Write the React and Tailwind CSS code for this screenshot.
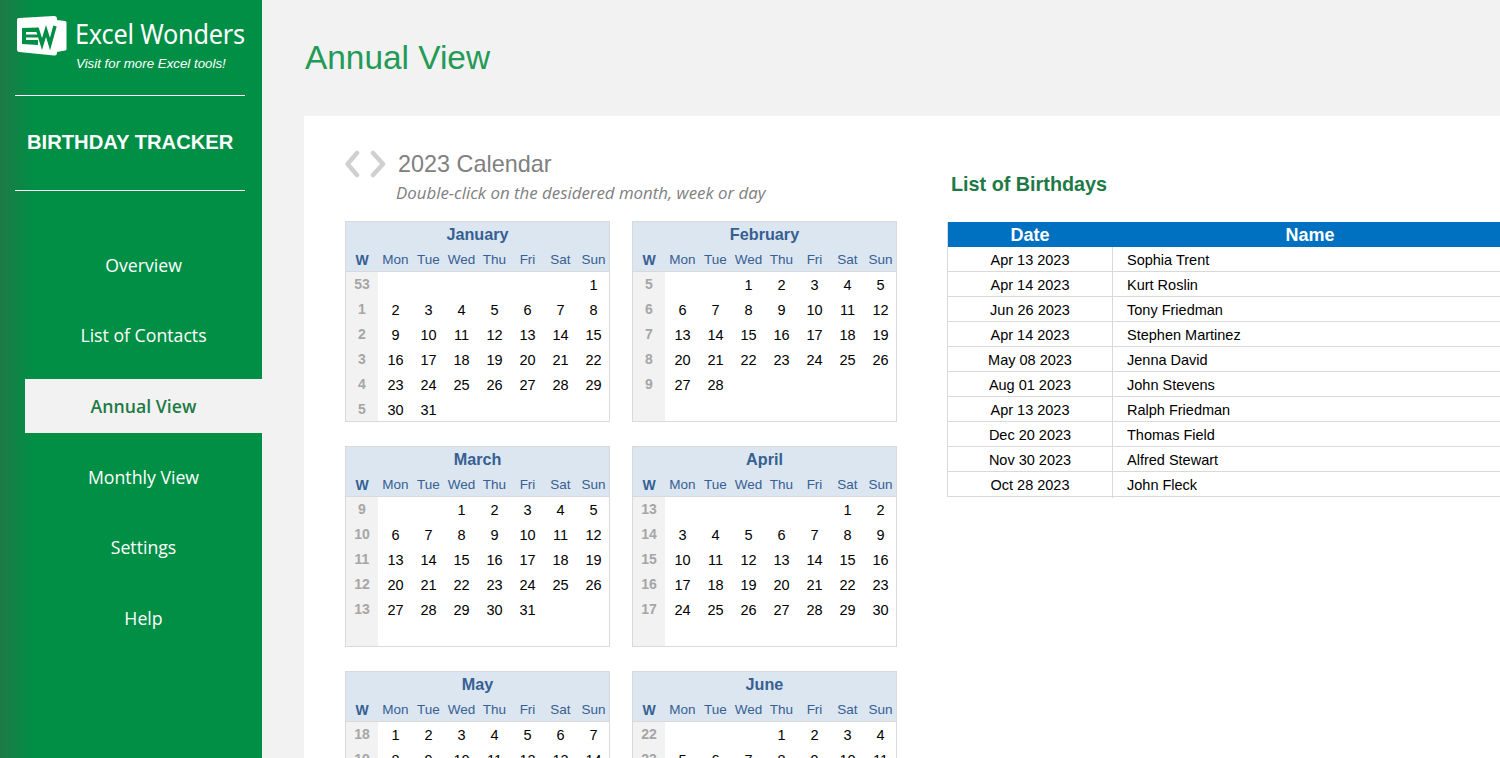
const navItems = ['Overview', 'List of Contacts', 'Annual View', 'Monthly View', 'Settings', 'Help'];

const months = [
  { name: 'January', index: 0, week: 53 },
  { name: 'February', index: 1, week: 5 },
  { name: 'March', index: 2, week: 9 },
  { name: 'April', index: 3, week: 13 },
  { name: 'May', index: 4, week: 18 },
  { name: 'June', index: 5, week: 22 },
];

const days = ['Mon', 'Tue', 'Wed', 'Thu', 'Fri', 'Sat', 'Sun'];

const birthdays = [
  ['Apr 13 2023', 'Sophia Trent'],
  ['Apr 14 2023', 'Kurt Roslin'],
  ['Jun 26 2023', 'Tony Friedman'],
  ['Apr 14 2023', 'Stephen Martinez'],
  ['May 08 2023', 'Jenna David'],
  ['Aug 01 2023', 'John Stevens'],
  ['Apr 13 2023', 'Ralph Friedman'],
  ['Dec 20 2023', 'Thomas Field'],
  ['Nov 30 2023', 'Alfred Stewart'],
  ['Oct 28 2023', 'John Fleck'],
];

const buildWeeks = monthIndex => {
  const offset = (new Date(2023, monthIndex, 1).getDay() + 6) % 7;
  const total = new Date(2023, monthIndex + 1, 0).getDate();
  const cells = [...Array(offset).fill(null), ...Array.from({ length: total }, (_, i) => i + 1)];
  const weeks = [];
  for (let i = 0; i < cells.length; i += 7) weeks.push(cells.slice(i, i + 7));
  return weeks;
};

const Logo = () => (
  <svg width="50" height="40" viewBox="0 0 50 40" className="shrink-0">
    <path d="M40 4 L48 5 Q49.5 5 49.5 6.5 L49.5 33 Q49.5 34.500 48 34.500 L40 36 Z" fill="#fff" />
    <path d="M2 2 L37 0 Q40 0 40 3 L40 37 Q40 40 37 39.500 L2 36 Q0 35.500 0 33.500 L0 4 Q0 2 2 2 Z" fill="#fff" />
    <path d="M5 12 L21 11.500 L21 29 L5 28 Z" fill="#008f45" />
    <path d="M9 16 H21 V18.500 H9 Z M9 21.500 H21 V24 H9 Z" fill="#fff" />
    <path d="M20 12 L25 28 L29 15 L33 28 L38 10" fill="none" stroke="#008f45" strokeWidth="3.500" />
  </svg>
);

const Sidebar = () => (
  <aside className="flex h-[758px] w-[262px] shrink-0 flex-col bg-[linear-gradient(90deg,#1e7a45_0,#008f45_34px)] text-white">
    <div className="flex h-[95px] flex-col pt-[16px]">
      <div className="flex items-start pl-[17px]">
        <Logo />
        <span className="ml-[8px] origin-left scale-x-[0.935] -translate-y-[1px] font-['Noto_Sans',sans-serif] text-[27px] leading-[38px] tracking-[-0.2px] whitespace-nowrap">
          Excel Wonders
        </span>
      </div>
      <p className="pl-[76px] text-[13.3px] leading-[16px] italic">Visit for more Excel tools!</p>
    </div>
    <div className="mx-[15px] h-px w-[230px] bg-white" />
    <div className="flex h-[94px] items-center pb-[2px] pl-[27px] text-[20.2px] font-bold">BIRTHDAY TRACKER</div>
    <div className="mx-[15px] h-px w-[230px] bg-white" />
    <nav className="mt-[47px] flex flex-col pl-[25px] font-['Open_Sans',sans-serif] text-[17.7px]">
      {navItems.map(item => (
        <div
          key={item}
          className={
            item === 'Annual View'
              ? 'mb-[16.6px] flex h-[54px] items-center justify-center bg-[#f2f2f2] font-semibold text-[#1e7a45]'
              : 'mb-[16.6px] flex h-[54px] items-center justify-center'
          }
        >
          {item}
        </div>
      ))}
    </nav>
  </aside>
);

const MonthCard = ({ name, index, week }) => {
  const weeks = buildWeeks(index);
  const rows = Array.from({ length: 6 }, (_, i) => weeks[i] || null);

  return (
    <div className="h-[201px] w-[265px] overflow-hidden border border-[#d9d9d9] bg-white">
      <div className="h-[50px] border-b border-[#d9d9d9] bg-[#dce6f1] text-[#366092]">
        <div className="h-[25px] text-center text-[16.2px] leading-[25px] font-bold">{name}</div>
        <div className="grid h-[24px] grid-cols-[33px_repeat(7,33px)] text-center text-[13.5px] leading-[26px]">
          <span className="pr-px text-[14px] font-bold">W</span>
          {days.map(day => (
            <span key={day}>{day}</span>
          ))}
        </div>
      </div>
      <div className="grid h-[150px] grid-cols-[32px_1fr]">
        <div className="bg-[#f2f2f2]">
          {rows.map((row, i) => (
            <div key={i} className="h-[25px] text-center text-[14px] leading-[24px] font-bold text-[#a6a6a6]">
              {row ? (week === 53 ? (i === 0 ? 53 : i) : week + i) : ''}
            </div>
          ))}
        </div>
        <div className="pl-px">
          {rows.map((row, i) => (
            <div key={i} className="grid h-[25px] grid-cols-[repeat(7,33px)] text-center text-[14.5px] leading-[26px] text-black">
              {(row || []).map((day, j) => (
                <span key={j}>{day}</span>
              ))}
            </div>
          ))}
        </div>
      </div>
    </div>
  );
};

const Calendar = () => (
  <section className="w-[552px] shrink-0">
    <div className="flex h-[30px] items-center">
      <svg width="44" height="28" viewBox="0 0 44 28" fill="none" stroke="#d0d0d0" strokeWidth="4.500" strokeLinecap="round" strokeLinejoin="round" className="-ml-[1px]">
        <path d="M13 3 L3.500 14 L13 25" />
        <path d="M29 3 L39 14 L29 25" />
      </svg>
      <h2 className="ml-[10px] text-[23.4px] leading-[30px] text-[#808080]">2023 Calendar</h2>
    </div>
    <p className="mt-[4px] h-[19px] pl-[51px] font-['Open_Sans',sans-serif] text-[16.85px] leading-[19px] font-medium whitespace-nowrap text-[#808080] italic">
      Double-click on the desidered month, week or day
    </p>
    <div className="mt-[19px] grid grid-cols-[265px_265px] gap-x-[22px] gap-y-[24px]">
      {months.map(month => (
        <MonthCard key={month.name} {...month} />
      ))}
    </div>
  </section>
);

const BirthdayList = () => (
  <section className="ml-[50px] min-w-0 flex-1">
    <h2 className="mt-[23px] ml-[4px] h-[24px] text-[19.8px] leading-[24px] font-bold text-[#1e7a45]">List of Birthdays</h2>
    <div className="mt-[26px] w-[600px] border-l border-[#d9d9d9]">
      <div className="grid h-[25px] grid-cols-[165px_1fr] bg-[#0070c0] text-[18px] leading-[26px] font-bold text-white">
        <span className="pl-[62.5px]">Date</span>
        <span className="pl-[172.5px]">Name</span>
      </div>
      {birthdays.map(([date, person], i) => (
        <div key={i} className="grid h-[25px] grid-cols-[165px_1fr] border-b border-[#d9d9d9] text-[14.5px] leading-[26px] text-black">
          <span className="border-r border-[#d9d9d9] text-center">{date}</span>
          <span className="pl-[14px]">{person}</span>
        </div>
      ))}
    </div>
  </section>
);

const App = () => (
  <div className="flex h-[758px] w-[1500px] overflow-hidden bg-[#f2f2f2] font-['Liberation_Sans',Arial,sans-serif]">
    <Sidebar />
    <main className="ml-[42px] min-w-0 flex-1">
      <h1 className="h-[116px] pt-[36px] pl-px text-[33.4px] leading-[44px] text-[#239a55]">Annual View</h1>
      <div className="flex h-[642px] overflow-hidden bg-white pt-[33px] pl-[41px]">
        <Calendar />
        <BirthdayList />
      </div>
    </main>
  </div>
);

export default App;
